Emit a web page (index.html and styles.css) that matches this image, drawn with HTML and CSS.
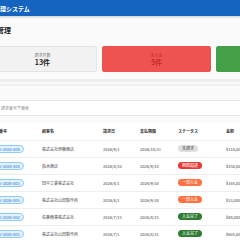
FILE: index.html
```html
<!DOCTYPE html>
<html lang="ja">

<head>
    <title>請求書管理システム</title>
    <meta name="viewport" content="initial-scale=1, width=device-width">
    <link rel="stylesheet" href="styles.css">
</head>

<body>
    <div class="page">
        <header class="topbar">
            <span class="brand">請求書管理システム</span>
        </header>

        <main class="main">
            <h1>請求書管理</h1>

            <div class="content">
                <div class="stats">
                    <div class="stat">
                        <span class="stat-label">請求件数</span>
                        <span class="stat-value">13件</span>
                    </div>
                    <div class="stat stat-red">
                        <span class="stat-label">未入金</span>
                        <span class="stat-value">5件</span>
                    </div>
                    <div class="stat stat-green">
                        <span class="stat-label">入金済</span>
                        <span class="stat-value">6件</span>
                    </div>
                </div>

                <div class="toolbar"></div>

                <div class="search">
                    <input type="text" placeholder="請求番号で検索">
                </div>

                <table class="invoices">
                    <colgroup>
                        <col style="width: 51px">
                        <col style="width: 61px">
                        <col style="width: 37px">
                        <col style="width: 38px">
                        <col style="width: 48px">
                        <col style="width: 50px">
                    </colgroup>
                    <thead>
                        <tr>
                            <th>請求番号</th>
                            <th>顧客名</th>
                            <th>請求日</th>
                            <th>支払期限</th>
                            <th>ステータス</th>
                            <th>金額</th>
                        </tr>
                    </thead>
                    <tbody>
                        <tr>
                            <td><span class="inv">INV-2026-006</span></td>
                            <td>株式会社伊藤商店</td>
                            <td>2026/9/1</td>
                            <td>2026/10/31</td>
                            <td><span class="status st-draft">未請求</span></td>
                            <td>¥110,000</td>
                        </tr>
                        <tr>
                            <td><span class="inv">INV-2026-004</span></td>
                            <td>鈴木商店</td>
                            <td>2026/8/10</td>
                            <td>2026/9/10</td>
                            <td><span class="status st-overdue">期限超過</span></td>
                            <td>¥250,000</td>
                        </tr>
                        <tr>
                            <td><span class="inv">INV-2026-003</span></td>
                            <td>田中工業株式会社</td>
                            <td>2026/8/1</td>
                            <td>2026/9/30</td>
                            <td><span class="status st-partial">一部入金</span></td>
                            <td>¥165,000</td>
                        </tr>
                        <tr>
                            <td><span class="inv">INV-2026-005</span></td>
                            <td>株式会社山田製作所</td>
                            <td>2026/8/1</td>
                            <td>2026/9/30</td>
                            <td><span class="status st-partial">一部入金</span></td>
                            <td>¥33,000</td>
                        </tr>
                        <tr>
                            <td><span class="inv">INV-2026-002</span></td>
                            <td>佐藤商事株式会社</td>
                            <td>2026/7/15</td>
                            <td>2026/8/15</td>
                            <td><span class="status st-paid">入金完了</span></td>
                            <td>¥88,000</td>
                        </tr>
                        <tr>
                            <td><span class="inv">INV-2026-001</span></td>
                            <td>株式会社山田製作所</td>
                            <td>2026/7/1</td>
                            <td>2026/8/31</td>
                            <td><span class="status st-paid">入金完了</span></td>
                            <td>¥605,000</td>
                        </tr>
                    </tbody>
                </table>
            </div>
        </main>
    </div>
</body>
</html>
```

FILE: styles.css
```css
* {
    box-sizing: border-box;
    font-family: "Noto Sans CJK JP", "Noto Sans", sans-serif;
}

html,
body {
    margin: 0;
    padding: 0;
    overflow: hidden;
    background-color: #fafafa;
    color: #222;
}

.page {
    margin-left: -24px;
    width: 300px;
}

.topbar {
    height: 16px;
    display: flex;
    align-items: center;
    background-color: #1565c0;
    box-shadow: 0 1px 2px rgba(0, 0, 0, 0.2);
}

.brand {
    color: #fff;
    font-size: 6px;
    font-weight: bold;
}

h1 {
    margin: 9px 0 0;
    font-size: 7px;
    font-weight: bold;
    line-height: 10px;
}

.content {
    padding: 0 12px;
}

.stats {
    display: flex;
    gap: 5px;
    margin-top: 11px;
}

.stat {
    flex: 0 0 109px;
    height: 26px;
    display: flex;
    flex-flow: column;
    align-items: center;
    justify-content: center;
    background-color: #f2f2f2;
    border: 1px solid #e4e4e4;
    border-radius: 2px;
}

.stat-label {
    font-size: 4px;
    color: #777;
    line-height: 6px;
}

.stat-value {
    font-size: 7px;
    font-weight: bold;
    line-height: 9px;
}

.stat-red {
    background-color: #ef5350;
    border-color: #ef5350;
    color: #c62828;
}

.stat-red .stat-label {
    color: #c62828;
}

.stat-green {
    background-color: #43a047;
    border-color: #43a047;
    color: #1b5e20;
}

.stat-green .stat-label {
    color: #1b5e20;
}

.toolbar {
    margin-top: 7px;
    height: 7px;
    border-top: 3px solid #eee;
    border-bottom: 2px solid #f0f0f0;
}

.search {
    margin-top: 5px;
}

.search input {
    width: 100%;
    height: 16px;
    padding: 0 12px;
    font-size: 4px;
    border: 1px solid #e6e6e6;
    border-radius: 2px;
    background-color: #fff;
    outline: none;
}

.search input::placeholder {
    color: #888;
}

.invoices {
    margin-top: 7px;
    table-layout: fixed;
    border-collapse: collapse;
    width: 285px;
    background-color: #fff;
}

.invoices th,
.invoices td {
    height: 17px;
    padding: 0 3px;
    text-align: left;
    font-size: 4px;
    white-space: nowrap;
    border-bottom: 1px solid #eee;
}

.invoices th {
    font-weight: bold;
    color: #333;
}

.invoices td {
    color: #444;
}

.inv {
    display: inline-block;
    padding: 0 3px;
    line-height: 6px;
    color: #1976d2;
    background-color: #e3f2fd;
    border: 1px solid #90caf9;
    border-radius: 4px;
}

.status {
    display: inline-block;
    padding: 0 4px;
    line-height: 7px;
    border-radius: 4px;
    color: #fff;
}

.st-draft {
    background-color: #e0e0e0;
    color: #444;
}

.st-overdue {
    background-color: #e53935;
}

.st-partial {
    background-color: #ff7043;
}

.st-paid {
    background-color: #2e7d32;
}
```
